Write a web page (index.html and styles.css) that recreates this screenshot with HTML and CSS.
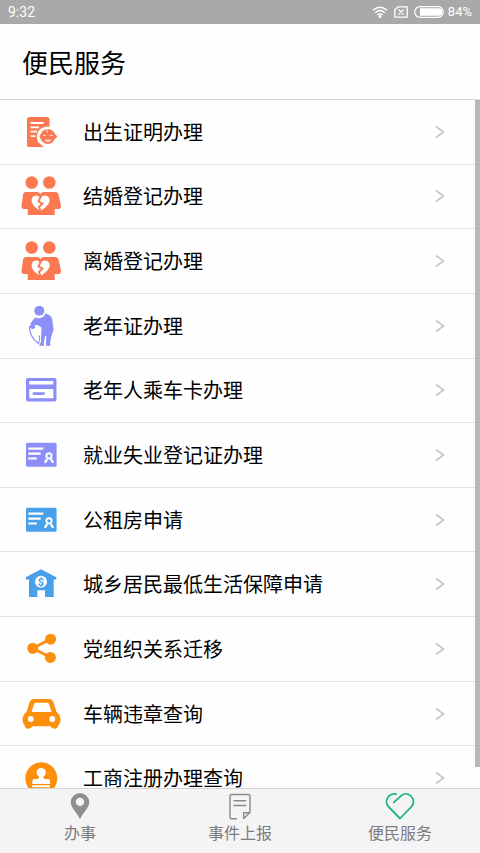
FILE: index.html
```html
<!DOCTYPE html>
<html lang="zh-CN">
<head>
<meta charset="utf-8">
<meta name="viewport" content="width=device-width, initial-scale=1">
<title>便民服务</title>
<link rel="stylesheet" href="styles.css">
</head>
<body>
<svg class="sprite" aria-hidden="true">
  <symbol id="chevron" viewBox="0 0 10 14"><path d="M1 1.500 8.500 7 1 12.500" fill="none" stroke="#c6c6ca" stroke-width="1.600"/></symbol>
  <symbol id="couple" viewBox="0 0 40 40">
    <g fill="currentColor"><circle cx="10.700" cy="6.500" r="6.300"/><circle cx="28.300" cy="6.500" r="6.300"/>
    <path d="M5 16h11q2.500 0 3.500 2 1-2 3.500-2h11q3 0 3.700 3l2.200 10.500q.4 3.500-3 3.500h-3.200v6H6.800v-6H3.500q-3.400 0-3-3.500L2 19q.500-3 3-3z"/></g>
    <path d="M19.500 35Q9 29 10.800 23c1-4 6.700-4.700 8.700-.8 2-3.900 8-3.200 9 .8 1.500 6-9 12-9 12z" fill="#fff"/>
    <path d="M20 20l-2.500 5.500 4 2-3.500 3.500 2 5" fill="none" stroke="currentColor" stroke-width="1.900"/>
  </symbol>
  <symbol id="idcard" viewBox="0 0 40 40">
    <rect x="5" y="7.700" width="30.600" height="24" rx="1.500" fill="currentColor"/>
    <path d="M7.300 13.700h15M7.300 18.700h12.400M7.300 23.500h8.500" stroke="#fff" stroke-width="2.200"/>
    <circle cx="28" cy="20.800" r="2.600" fill="none" stroke="#fff" stroke-width="2"/>
    <path d="M23.300 27.200q2 0 2.500-3.200M32.700 27.200q-2 0-2.500-3.200" fill="none" stroke="#fff" stroke-width="2.200"/>
  </symbol>
</svg>

<header class="status">
  <span class="time">9:32</span>
  <span class="indicators">
    <svg width="16" height="12" viewBox="0 0 16 12" fill="none" stroke="#fff" stroke-width="1.400"><path d="M1 4.300q7-6.200 14 0M3.200 6.700q4.800-4.200 9.600 0M5.400 9q2.600-2.200 5.200 0"/><circle cx="8" cy="10.500" r=".8" fill="#fff"/></svg>
    <svg width="14" height="12" viewBox="0 0 14 12" fill="none" stroke="#fff" stroke-width="1.300"><path d="M4 .8h9.200v10.400H.8V4zM4.500 3.500l5 5M9.500 3.500l-5 5"/></svg>
    <svg width="30" height="12" viewBox="0 0 30 12"><rect x=".7" y=".7" width="28.600" height="10.600" rx="5.300" fill="none" stroke="#fff" stroke-width="1.200"/><path d="M6 2.200h18.500a3.800 3.800 0 0 1 0 7.600H6z" fill="#fff"/></svg>
    <span class="charge">84%</span>
  </span>
</header>

<h1 class="title">便民服务</h1>

<main class="panel">
  <div class="scroller">
    <ul class="services">
      <li><a class="service coral" href="#">
        <svg class="icon" viewBox="0 0 40 40">
          <rect x="6" y="5" width="22.500" height="30" rx="2.500" fill="currentColor"/>
          <path d="M9.500 11h13M9.500 15.300h8.500M9.500 19.700h6.500M9.500 24.200h5" stroke="#fff" stroke-width="1.800"/>
          <path d="M19.500 32.700a10.300 10.300 0 0 1 1-16.500 10 10 0 0 1 9-1.200v21h-7z" fill="#fff"/>
          <path d="M6 31h12.300q2 2.700 4.700 4H8.500Q6 35 6 32.500z" fill="currentColor"/>
          <circle cx="26.800" cy="24.500" r="7.500" fill="currentColor"/>
          <path d="M33 21.200l3.500 3.300-3.500 3.300zM20.500 21.500l-2 3 2 3z" fill="currentColor"/>
          <path d="M26.500 17.500q-2 2 .5 3.500M22 23.700q1.500-1.200 2.800 0M28.800 23.700q1.500-1.200 2.800 0M24 28.200h5.600q-2.800 2.600-5.600 0z" fill="none" stroke="#fff" stroke-width=".9"/>
        </svg>
        <span class="name">出生证明办理</span><svg class="chevron"><use href="#chevron"/></svg></a></li>
      <li><a class="service coral" href="#"><svg class="icon"><use href="#couple"/></svg><span class="name">结婚登记办理</span><svg class="chevron"><use href="#chevron"/></svg></a></li>
      <li><a class="service coral" href="#"><svg class="icon"><use href="#couple"/></svg><span class="name">离婚登记办理</span><svg class="chevron"><use href="#chevron"/></svg></a></li>
      <li><a class="service violet" href="#">
        <svg class="icon" viewBox="0 0 40 40">
          <circle cx="18.300" cy="4.800" r="5" fill="currentColor"/>
          <path d="M14 11.500q4 1.500 7 0 2.700-1.500 3.500-4 5 1 6.500 5l1.700 11-2 5.500-1.700 8 .5 2.700h-4.500l.2-9.700h-1l-1.500 6.500.3 3.200h-5l2-3.700.5-14.500-4-2.500-4 .5-3.500-1.500z" fill="currentColor"/>
          <path d="M9.500 19.500q7-1.500 7.500 2 .5 8 1 15Q8.500 30 8.500 22z" fill="#fff"/>
          <path d="M13 20q-4.500-2-4.500 2.500Q9 31 17.500 37.500q2-4 .8-8" fill="none" stroke="currentColor" stroke-width="1.200"/>
          <path d="M8.700 19.500l5-1 .5 3.500q-3 2-5 0z" fill="currentColor"/>
        </svg>
        <span class="name">老年证办理</span><svg class="chevron"><use href="#chevron"/></svg></a></li>
      <li><a class="service violet" href="#">
        <svg class="icon" viewBox="0 0 40 40">
          <rect x="5" y="8" width="30.500" height="23.500" rx="2" fill="currentColor"/>
          <path d="M8.300 11h24v3.500h-24zM8.300 19h24v9.300h-24z" fill="#fff"/>
          <path d="M13 23.600h9.500" stroke="currentColor" stroke-width="2.800" stroke-linecap="round"/>
        </svg>
        <span class="name">老年人乘车卡办理</span><svg class="chevron"><use href="#chevron"/></svg></a></li>
      <li><a class="service violet" href="#"><svg class="icon"><use href="#idcard"/></svg><span class="name">就业失业登记证办理</span><svg class="chevron"><use href="#chevron"/></svg></a></li>
      <li><a class="service blue" href="#"><svg class="icon"><use href="#idcard"/></svg><span class="name">公租房申请</span><svg class="chevron"><use href="#chevron"/></svg></a></li>
      <li><a class="service blue" href="#">
        <svg class="icon" viewBox="0 0 40 40">
          <path d="M20 5.300 35.300 13.300v2.200h-2.600V33H24v-6.700h-7.700V33H8V15.500H4.800v-2.200z" fill="currentColor"/>
          <circle cx="20" cy="17.700" r="6" fill="#fff"/>
          <text x="20" y="22" class="coin">$</text>
        </svg>
        <span class="name">城乡居民最低生活保障申请</span><svg class="chevron"><use href="#chevron"/></svg></a></li>
      <li><a class="service orange" href="#">
        <svg class="icon" viewBox="0 0 40 40">
          <path d="M29.700 10 11.700 19.300l17.600 9" fill="none" stroke="currentColor" stroke-width="2.800"/>
          <g fill="currentColor"><circle cx="11.700" cy="19.300" r="5.500"/><circle cx="29.600" cy="10.200" r="5.500"/><circle cx="29.400" cy="28.400" r="5.500"/></g>
        </svg>
        <span class="name">党组织关系迁移</span><svg class="chevron"><use href="#chevron"/></svg></a></li>
      <li><a class="service orange" href="#">
        <svg class="icon" viewBox="0 0 40 40">
          <path d="M13 5h15q3.500 0 4.500 3.500L35.500 18q4 2.500 4 7.500 0 3.500-2 5.500-.5 3.700-4 3.700-3 0-4-2.400h-18q-1 2.400-4 2.400-3.500 0-4-3.700-2-2-2-5.500 0-5 4-7.500l3-9.500Q9.500 5 13 5z" fill="currentColor"/>
          <path d="M14.500 8.700h12q1 0 1.500 1.300l2.500 8h-20L13 10q.5-1.300 1.500-1.300z" fill="#fff"/>
          <circle cx="9.700" cy="25" r="2.900" fill="#fff"/><circle cx="31.300" cy="25" r="2.900" fill="#fff"/>
        </svg>
        <span class="name">车辆违章查询</span><svg class="chevron"><use href="#chevron"/></svg></a></li>
      <li><a class="service orange" href="#">
        <svg class="icon" viewBox="0 0 40 40">
          <circle cx="20.300" cy="20.300" r="16" fill="currentColor"/>
          <circle cx="20.200" cy="14.500" r="4.600" fill="#fff"/>
          <path d="M18 17h4.400q-.4 3.500 1.100 4h3.500q2 0 2 2v3H11.300v-3q0-2 2-2h3.500Q18.500 20.500 18 17zM11.300 27.300H29v1.900H11.300z" fill="#fff"/>
        </svg>
        <span class="name">工商注册办理查询</span><svg class="chevron"><use href="#chevron"/></svg></a></li>
    </ul>
  </div>
  <div class="thumb"></div>
</main>

<nav class="tabs">
  <a class="tab" href="#">
    <svg class="tab-icon" viewBox="0 0 32 28"><path d="M16 27.200C13.500 21 6.800 16 6.800 10.200a9.200 9.200 0 0 1 18.400 0C25.200 16 18.500 21 16 27.200zM16 5.700a4.200 4.200 0 1 0 0 8.400 4.200 4.200 0 0 0 0-8.400z" fill="#8f8f8f" fill-rule="evenodd"/></svg>
    <span>办事</span>
  </a>
  <a class="tab" href="#">
    <svg class="tab-icon" viewBox="0 0 32 28" fill="none" stroke="#8a8a8a" stroke-width="1.400" stroke-linejoin="round"><path d="M13 26.800H7.500Q6 26.800 6 25.300V4Q6 2.500 7.500 2.500h17Q26 2.500 26 4v17M9.500 8.800h12.800M9.500 13.500h12.800M19.700 26.500v-5.700h6z"/></svg>
    <span>事件上报</span>
  </a>
  <a class="tab" href="#" aria-current="page">
    <svg class="tab-icon" viewBox="0 0 32 28" fill="none" stroke="#1fb583" stroke-width="1.800" stroke-linecap="round" stroke-linejoin="round"><path d="M9.700 10.300 17 3.800c3-2.700 7-2.500 9.700 0 3.700 3.500 3.700 8 .5 11L16 26.500 4.800 15C1.500 11.500 2 7.200 4.800 4.200 6.500 2.300 9.500 1.500 12 2"/></svg>
    <span>便民服务</span>
  </a>
</nav>
</body>
</html>
```
FILE: styles.css
```css
* {
  box-sizing: border-box;
}

body {
  display: flex;
  flex-direction: column;
  height: 100vh;
  margin: 0;
  background: #fefefe;
  color: #000;
  font-family: "Noto Sans CJK SC", sans-serif;
}

a {
  color: inherit;
  text-decoration: none;
}

svg {
  display: block;
  flex: none;
}

.sprite {
  position: absolute;
  width: 0;
  height: 0;
}

.status {
  display: flex;
  flex: none;
  align-items: center;
  justify-content: space-between;
  height: 24px;
  padding: 0 8px;
  background: #a9a9a9;
  color: #fff;
  font-family: Roboto, sans-serif;
  font-size: 14px;
  line-height: 24px;
}

.indicators {
  display: flex;
  align-items: center;
  gap: 6px;
}

.charge {
  margin-left: -2px;
  font-size: 13px;
}

.title {
  flex: none;
  margin: 0;
  padding: 18px 22px;
  border-bottom: 1px solid #d8d8da;
  font-size: 26px;
  font-weight: 400;
  line-height: 39px;
}

.panel {
  position: relative;
  flex: 1;
  min-height: 0;
}

.scroller {
  height: 100%;
  overflow-y: auto;
  scrollbar-width: none;
}

.services {
  display: grid;
  grid-auto-rows: 1fr;
  min-height: 711px;
  margin: 0;
  padding: 0;
  list-style: none;
}

.services li {
  display: grid;
  border-bottom: 1px solid #e1e1e4;
}

.service {
  display: flex;
  align-items: center;
  gap: 22px;
  padding: 0 35px 0 21px;
}

.icon {
  width: 40px;
  height: 40px;
}

.name {
  flex: 1;
  font-size: 20px;
  line-height: 30px;
}

.chevron {
  width: 10px;
  height: 14px;
}

.coin {
  fill: currentColor;
  font: 700 11px Roboto, sans-serif;
  text-anchor: middle;
}

.coral {
  color: #fb7850;
}

.violet {
  color: #8c8ff8;
}

.blue {
  color: #49a0ea;
}

.orange {
  color: #fc8f0c;
}

.service .name {
  color: #000;
}

.thumb {
  position: absolute;
  top: 0;
  right: 0;
  width: 5px;
  height: 97%;
  background: #b8b8ba;
}

.tabs {
  display: grid;
  flex: none;
  grid-template-columns: repeat(3, 1fr);
  padding: 3px 0 8px;
  border-top: 1px solid #d6d6d8;
  background: #f4f3f6;
}

.tab {
  display: flex;
  flex-direction: column;
  align-items: center;
  color: #7c7c7c;
  font-size: 16px;
  line-height: 25px;
}

.tab-icon {
  width: 32px;
  height: 28px;
}
```
